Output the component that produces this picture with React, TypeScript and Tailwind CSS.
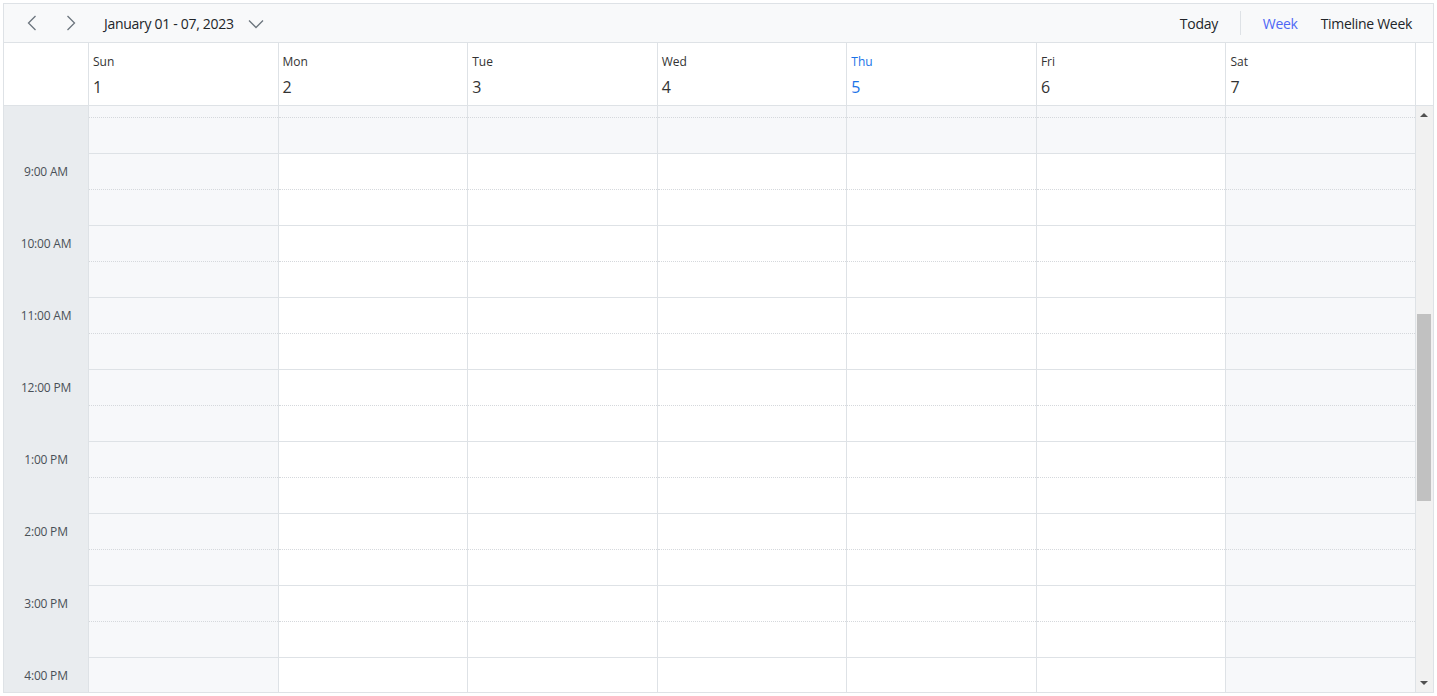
import React from "react";

const days = [
  { n: "Sun", d: 1, off: true },
  { n: "Mon", d: 2 },
  { n: "Tue", d: 3 },
  { n: "Wed", d: 4 },
  { n: "Thu", d: 5, today: true },
  { n: "Fri", d: 6 },
  { n: "Sat", d: 7, off: true },
];

const hours = ["", "9:00 AM", "10:00 AM", "11:00 AM", "12:00 PM", "1:00 PM", "2:00 PM", "3:00 PM", "4:00 PM"];

function Chevron({ dir }: { dir: "left" | "right" | "down" }) {
  if (dir === "down") {
    return (
      <svg width="16" height="10" viewBox="0 0 16 10" fill="none">
        <path d="M1 1.5 L8 8.5 L15 1.5" stroke="#6c757d" strokeWidth="1.3" />
      </svg>
    );
  }
  return (
    <svg width="10" height="16" viewBox="0 0 10 16" fill="none">
      {dir === "left" ? (
        <path d="M8.5 1 L1.5 8 L8.5 15" stroke="#6c757d" strokeWidth="1.3" />
      ) : (
        <path d="M1.5 1 L8.5 8 L1.5 15" stroke="#6c757d" strokeWidth="1.3" />
      )}
    </svg>
  );
}

export default function App() {
  return (
    <div className="p-[3px] bg-white" style={{ fontFamily: '"Open Sans", "Noto Sans", sans-serif' }}>
      <div className="border border-[#dee2e6] h-[690px] flex flex-col overflow-hidden">
        {/* Toolbar */}
        <div className="h-[39px] shrink-0 bg-[#f8f9fa] border-b border-[#dee2e6] flex items-center text-[14px] text-[#212529]">
          <div className="flex items-center pl-[20px]">
            <span className="w-[16px] flex justify-center"><Chevron dir="left" /></span>
            <span className="w-[16px] flex justify-center ml-[23px]"><Chevron dir="right" /></span>
            <span className="ml-[25px] tracking-[-0.3px]">January 01 - 07, 2023</span>
            <span className="ml-[14px] mt-[1px]"><Chevron dir="down" /></span>
          </div>
          <div className="flex-1" />
          <div className="flex items-center pr-[21px]">
            <span className="tracking-[-0.3px]">Today</span>
            <span className="w-px h-[24px] bg-[#dee2e6] ml-[22px] mr-[22px]" />
            <span className="text-[#4f68f5] tracking-[-0.3px]">Week</span>
            <span className="ml-[23px] tracking-[-0.3px]">Timeline Week</span>
          </div>
        </div>

        {/* Header */}
        <div className="h-[63px] shrink-0 flex border-b border-[#dee2e6] bg-white">
          <div className="w-[85px] shrink-0 border-r border-[#dee2e6]" />
          {days.map((d) => (
            <div key={d.n} className="flex-1 border-r border-[#dee2e6] pl-[4px] pt-[11px]">
              <div className={`text-[12px] leading-[16px] ${d.today ? "text-[#1a73e8]" : "text-[#333]"}`}>{d.n}</div>
              <div className={`text-[16px] leading-[20px] mt-[7px] ${d.today ? "text-[#1a73e8]" : "text-[#333]"}`}>{d.d}</div>
            </div>
          ))}
          <div className="w-[17px] shrink-0" />
        </div>

        {/* Body */}
        <div className="flex-1 flex min-h-0 relative">
          <div className="flex-1 overflow-hidden">
            <div className="flex -mt-[24px]">
              <div className="w-[85px] shrink-0 bg-[#e9ecef] border-r border-[#dee2e6]">
                {hours.map((h, i) => (
                  <div key={i} className="h-[72px] flex flex-col">
                    <div className="h-[36px] flex items-center justify-center text-[12px] text-[#495057] tracking-[-0.2px]">{h}</div>
                  </div>
                ))}
              </div>
              {days.map((d) => (
                <div key={d.n} className="flex-1 border-r border-[#dee2e6]">
                  {hours.map((h, i) => {
                    const off = d.off || i === 0;
                    return (
                      <div key={i} className={`h-[72px] ${off ? "bg-[#f7f8fa]" : "bg-white"}`}>
                        <div className="h-[36px] border-b border-dotted border-[#d5d8dc]" />
                        <div className="h-[36px] border-b border-[#dee2e6]" />
                      </div>
                    );
                  })}
                </div>
              ))}
            </div>
          </div>
          {/* Scrollbar */}
          <div className="w-[17px] shrink-0 bg-[#f1f1f1] relative">
            <div className="absolute left-[4px] top-[7px] w-0 h-0 border-l-[4px] border-r-[4px] border-b-[4px] border-l-transparent border-r-transparent border-b-[#505050]" />
            <div className="absolute left-[1px] right-[2px] top-[208px] h-[187px] bg-[#c1c1c1]" />
            <div className="absolute left-[4px] bottom-[7px] w-0 h-0 border-l-[4px] border-r-[4px] border-t-[4px] border-l-transparent border-r-transparent border-t-[#505050]" />
          </div>
        </div>
      </div>
    </div>
  );
}
